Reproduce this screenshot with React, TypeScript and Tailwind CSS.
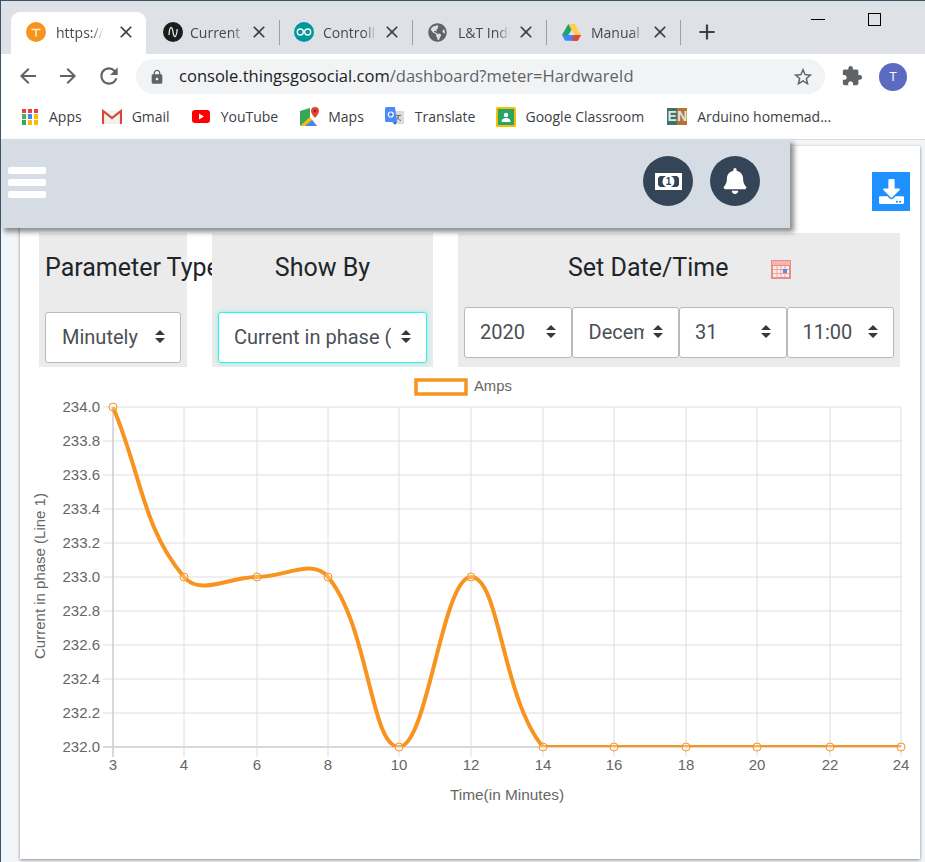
import type { ReactNode } from "react";
import { FaBell, FaDownload, FaGlobeAmericas } from "react-icons/fa";
import {
  MdAdd,
  MdArrowBack,
  MdArrowForward,
  MdClose,
  MdExtension,
  MdLock,
  MdRefresh,
  MdStarBorder,
} from "react-icons/md";

const ORANGE = "#f7931e";

function OrangeIcon() {
  return (
    <svg width="20" height="20" viewBox="0 0 20 20">
      <circle cx="10" cy="10" r="10" fill="#f7941d" />
      <path d="M5.5 7.5h9M10 7.5v7" stroke="#ffe9cf" strokeWidth="1.6" fill="none" />
    </svg>
  );
}

function SineIcon() {
  return (
    <svg width="20" height="20" viewBox="0 0 20 20">
      <circle cx="10" cy="10" r="10" fill="#1c1c1c" />
      <path d="M6 13C6.500 4 9 3 10 10s3.500 6 4.200-3" stroke="#e8e8e8" strokeWidth="1.300" fill="none" />
    </svg>
  );
}

function ArduinoIcon() {
  return (
    <svg width="20" height="20" viewBox="0 0 20 20">
      <circle cx="10" cy="10" r="10" fill="#00979c" />
      <circle cx="6.300" cy="10" r="3" stroke="#fff" strokeWidth="1.300" fill="none" />
      <circle cx="13.700" cy="10" r="3" stroke="#fff" strokeWidth="1.300" fill="none" />
    </svg>
  );
}

function DriveIcon() {
  return (
    <svg width="19" height="17" viewBox="0 0 19 17">
      <path d="M6.300 0h6.400l-6.300 11H0z" fill="#1fa463" />
      <path d="M6.300 0h6.400l6.300 11h-6.400z" fill="#ffd04b" />
      <path d="M0 11h19l-3.200 5.800H3.200z" fill="#4285f4" />
      <path d="M12.600 11H19l-3.200 5.800h-6.400z" fill="#ea4335" />
    </svg>
  );
}

function AppsIcon() {
  const colors = ["#ea4335", "#ea4335", "#ea4335", "#4caf50", "#4285f4", "#fbbc05", "#34a853", "#fbbc05", "#fbbc05"];
  return (
    <div className="grid h-[16px] w-[16px] grid-cols-3 gap-[1.500px]">
      {colors.map((c, i) => (
        <span key={i} style={{ background: c }} />
      ))}
    </div>
  );
}

function GmailIcon() {
  return (
    <svg width="20" height="16" viewBox="0 0 20 16">
      <path d="M1 2v13h18V2" fill="#f4f0ee" />
      <path d="M1 15V2l9 7 9-7v13" stroke="#d5473a" strokeWidth="2.200" fill="none" />
    </svg>
  );
}

function YoutubeIcon() {
  return (
    <svg width="18" height="13" viewBox="0 0 18 13">
      <rect width="18" height="13" rx="3" fill="#f00" />
      <path d="M7 3.500v6l5-3z" fill="#fff" />
    </svg>
  );
}

function MapsIcon() {
  return (
    <svg width="19" height="19" viewBox="0 0 19 19">
      <path d="M0 4l10-3v16L0 19z" fill="#34a853" />
      <path d="M0 19l10-9 7 9z" fill="#fbbc05" />
      <path d="M5 19l7-6 5 6z" fill="#4285f4" />
      <path d="M15 0a4 4 0 0 1 4 4c0 3-4 7-4 7s-4-4-4-7a4 4 0 0 1 4-4z" fill="#ea4335" />
      <circle cx="15" cy="4" r="1.500" fill="#8e2a22" />
    </svg>
  );
}

function TranslateIcon() {
  return (
    <svg width="19" height="19" viewBox="0 0 19 19">
      <rect x="7" y="4" width="12" height="13" rx="1" fill="#d8dade" />
      <path d="M11 8.500h5M13.500 8v1c0 2-1.500 4-3 4.500M12 10c.6 1.600 2 3 4 3.500" stroke="#6a6a6a" strokeWidth="1" fill="none" />
      <path d="M1.500 0H10l2 15H1.500A1.500 1.500 0 0 1 0 13.500v-12A1.500 1.500 0 0 1 1.500 0z" fill="#4c8bf5" />
      <circle cx="5.800" cy="7.500" r="2.500" stroke="#fff" strokeWidth="1.200" fill="none" />
      <path d="M8 15l2 3 2-3z" fill="#3367d6" />
    </svg>
  );
}

function ClassroomIcon() {
  return (
    <svg width="20" height="20" viewBox="0 0 20 20">
      <rect width="20" height="20" rx="1.500" fill="#fbbc04" />
      <rect x="2" y="2" width="16" height="16" fill="#25a667" />
      <circle cx="10" cy="8" r="2.200" fill="#fff" />
      <path d="M5.500 15c0-3 2-4 4.500-4s4.500 1 4.500 4z" fill="#fff" />
    </svg>
  );
}

function EnIcon() {
  return (
    <div className="flex h-[17px] w-[20px] text-center text-[14px] leading-[17px] font-bold text-[#dfe6e2] [font-family:'Liberation_Sans',sans-serif]">
      <span className="w-[10px] overflow-hidden bg-[#3f7268]">E</span>
      <span className="w-[10px] overflow-hidden bg-[#b87333]">N</span>
    </div>
  );
}

function Tab({ icon, label, cls, textW }: { icon: ReactNode; label: string; cls: string; textW: string }) {
  return (
    <div className={`relative flex h-[42px] items-center pb-[2px] ${cls}`}>
      <div className="flex w-[20px] shrink-0 justify-center">{icon}</div>
      <div
        className={`overflow-hidden whitespace-nowrap ${textW} text-[14px] text-[#45494f] [mask-image:linear-gradient(to_right,black_75%,transparent)]`}
      >
        {label}
      </div>
      <MdClose className="absolute top-[10px] right-[10px] text-[#3c4043]" size={20} />
    </div>
  );
}

function TabSep() {
  return <span className="mb-[9px] h-[25px] w-px shrink-0 bg-[#9aa0a6]" />;
}

function Bookmark({ icon, label, gap }: { icon: ReactNode; label: string; gap: string }) {
  return (
    <div className={`flex items-center ${gap}`}>
      <div className="flex w-[20px] justify-center">{icon}</div>
      <span className="text-[14px] whitespace-nowrap text-[#3c4043]">{label}</span>
    </div>
  );
}

function Chevrons() {
  return (
    <svg width="10" height="13" viewBox="0 0 10 13" className="shrink-0">
      <path d="M5 0l5 5H0zM5 13l5-5H0z" fill="#343a40" />
    </svg>
  );
}

function Select({ value, cls, textW }: { value: string; cls: string; textW: string }) {
  return (
    <div className={`flex items-center justify-between rounded-[3px] bg-white pb-[2px] text-[20px] text-[#495057] ${cls}`}>
      <span className={`overflow-hidden whitespace-nowrap ${textW}`}>{value}</span>
      <Chevrons />
    </div>
  );
}

function CalendarIcon() {
  return (
    <svg width="20" height="19" viewBox="0 0 20 19">
      <rect width="20" height="19" fill="#e58f88" />
      <rect x="1" y="1" width="18" height="4" fill="#f6b4ae" />
      <rect x="2" y="6" width="16" height="11" fill="#fdeceb" />
      <path d="M2 9.500h16M2 13.500h16M6 6v11M10 6v11M14 6v11" stroke="#eda29b" strokeWidth="1" />
      <rect x="12" y="9" width="4" height="4" fill="#5b8de8" />
    </svg>
  );
}

function MoneyIcon() {
  return (
    <svg width="27" height="17" viewBox="0 0 27 17">
      <rect width="27" height="17" fill="#fff" />
      <path d="M5 3h17l2 2v7l-2 2H5l-2-2V5z" fill="#344557" />
      <circle cx="13.500" cy="8.500" r="6" fill="#fff" />
      <text x="13.500" y="12" textAnchor="middle" fontSize="10" fontWeight="700" fill="#344557" fontFamily="Liberation Sans">
        1
      </text>
    </svg>
  );
}

const xs = [113, 184, 257, 328, 399, 471, 543, 614, 686, 757, 830, 901];
const xLabels = ["3", "4", "6", "8", "10", "12", "14", "16", "18", "20", "22", "24"];
const yTicks = ["234.0", "233.8", "233.6", "233.4", "233.2", "233.0", "232.8", "232.6", "232.4", "232.2", "232.0"];
const values = [234, 233, 233, 233, 232, 233, 232, 232, 232, 232, 232, 232];
const Y_TOP = 407;
const Y_BOTTOM = 747;

const pts = values.map((v, i) => ({ x: xs[i], y: Y_BOTTOM - (v - 232) * 170 }));

// same spline the chart library uses, tension 0.4
function linePath() {
  const clampY = (y: number) => Math.min(Y_BOTTOM, Math.max(Y_TOP, y));
  const ctrl = pts.map((cur, i) => {
    const prev = pts[Math.max(0, i - 1)];
    const next = pts[Math.min(pts.length - 1, i + 1)];
    const d01 = Math.hypot(cur.x - prev.x, cur.y - prev.y);
    const d12 = Math.hypot(next.x - cur.x, next.y - cur.y);
    const total = d01 + d12;
    const fa = (0.4 * d01) / total;
    const fb = (0.4 * d12) / total;
    return {
      px: cur.x - fa * (next.x - prev.x),
      py: clampY(cur.y - fa * (next.y - prev.y)),
      nx: cur.x + fb * (next.x - prev.x),
      ny: clampY(cur.y + fb * (next.y - prev.y)),
    };
  });
  let d = `M${pts[0].x} ${pts[0].y}`;
  for (let i = 1; i < pts.length; i++) {
    d += `C${ctrl[i - 1].nx} ${ctrl[i - 1].ny} ${ctrl[i].px} ${ctrl[i].py} ${pts[i].x} ${pts[i].y}`;
  }
  return d;
}

function Chart() {
  return (
    <svg width="905" height="490" viewBox="20 372 905 490" className="block [font-family:'Liberation_Sans',sans-serif]">
      <rect x="416" y="380" width="50" height="14" fill="#fff" stroke={ORANGE} strokeWidth="3.500" />
      <text x="474" y="391" fontSize="14.800" fill="#666">Amps</text>
      {yTicks.map((t, i) => {
        const y = Y_TOP + i * 34;
        return (
          <g key={t}>
            <line x1="103" x2="901" y1={y} y2={y} stroke={i === 10 ? "#cccccc" : "#dedede"} strokeWidth={i === 10 ? 1.500 : 1} />
            <text x="100" y={y + 5} textAnchor="end" fontSize="15" fill="#666">{t}</text>
          </g>
        );
      })}
      {xs.map((x, i) => (
        <g key={x}>
          <line x1={x} x2={x} y1={Y_TOP} y2="757" stroke={i === 0 ? "#cccccc" : "#dedede"} strokeWidth={i === 0 ? 1.500 : 1} />
          <text x={x} y="770" textAnchor="middle" fontSize="15" fill="#666">{xLabels[i]}</text>
        </g>
      ))}
      <clipPath id="area">
        <rect x="111" y={Y_TOP} width="792" height={Y_BOTTOM - Y_TOP} />
      </clipPath>
      <path d={linePath()} fill="none" stroke={ORANGE} strokeWidth="4" clipPath="url(#area)" />
      {pts.map((p) => (
        <circle key={p.x} cx={p.x} cy={p.y} r="4" fill="#fff" fillOpacity="0.25" stroke={ORANGE} strokeWidth="1" />
      ))}
      <text x="507" y="800" textAnchor="middle" fontSize="15.400" fill="#666">Time(in Minutes)</text>
      <text transform="translate(45 576) rotate(-90)" textAnchor="middle" fontSize="15" fill="#666">
        Current in phase (Line 1)
      </text>
    </svg>
  );
}

export default function App() {
  return (
    <div className="relative h-[862px] w-[925px] overflow-hidden border-t border-l border-[#3c5566] bg-[#f3f6f9] [font-family:Roboto,sans-serif]">
      {/* browser chrome */}
      <div className="[font-family:'Open_Sans',sans-serif]">
        <div className="relative flex h-[53px] items-end bg-[#dee1e6] pl-[10px]">
          <div className="rounded-t-[9px] bg-white">
            <Tab cls="w-[135px] pl-[15px]" icon={<OrangeIcon />} label="https://c" textW="ml-[10px] w-[48px]" />
          </div>
          <Tab cls="w-[133px] pl-[17px]" icon={<SineIcon />} label="Current" textW="ml-[7px] w-[56px]" />
          <TabSep />
          <Tab cls="w-[132px] pl-[14px]" icon={<ArduinoIcon />} label="Controll" textW="ml-[9px] w-[54px]" />
          <TabSep />
          <Tab cls="w-[133px] pl-[14px]" icon={<FaGlobeAmericas color="#5f6368" size={19} />} label="L&T Indi" textW="ml-[11px] w-[52px]" />
          <TabSep />
          <Tab cls="w-[133px] pl-[14px]" icon={<DriveIcon />} label="Manual" textW="ml-[10px] w-[54px]" />
          <TabSep />
          <MdAdd className="mb-[9px] ml-[13px] text-[#3c4043]" size={26} />
          <span className="absolute top-[18px] left-[810px] h-px w-[14px] bg-black" />
          <span className="absolute top-[12px] left-[867px] h-[13px] w-[13px] border border-black" />
        </div>
        <div className="flex h-[44px] items-center bg-white pl-[15px]">
          <MdArrowBack className="text-[#5f6368]" size={24} />
          <MdArrowForward className="ml-[16px] text-[#5f6368]" size={24} />
          <MdRefresh className="ml-[16px] text-[#5f6368]" size={26} />
          <div className="mt-px ml-[14px] flex h-[35px] w-[689px] items-center rounded-full bg-[#f1f3f4] pl-[13px]">
            <MdLock className="text-[#5f6368]" size={16} />
            <span className="ml-[14px] text-[16.560px] whitespace-nowrap text-[#202124]">
              console.thingsgosocial.com
              <span className="text-[#5f6368]">/dashboard?meter=HardwareId</span>
            </span>
            <MdStarBorder className="mr-[11px] ml-auto text-[#5f6368]" size={22} />
          </div>
          <MdExtension className="ml-[16px] text-[#5f6368]" size={22} />
          <div className="mt-[2px] ml-[16px] flex h-[28px] w-[28px] items-center justify-center rounded-full bg-[#5c6bc0] text-[13px] text-white">
            T
          </div>
        </div>
        <div className="flex h-[41px] items-center bg-white pb-[4px] pl-[19px]">
          <Bookmark icon={<AppsIcon />} label="Apps" gap="gap-[9px]" />
          <div className="ml-[20px]"><Bookmark icon={<GmailIcon />} label="Gmail" gap="gap-[10px]" /></div>
          <div className="ml-[21px]"><Bookmark icon={<YoutubeIcon />} label="YouTube" gap="gap-[10px]" /></div>
          <div className="ml-[21px]"><Bookmark icon={<MapsIcon />} label="Maps" gap="gap-[9px]" /></div>
          <div className="ml-[21px]"><Bookmark icon={<TranslateIcon />} label="Translate" gap="gap-[10px]" /></div>
          <div className="ml-[21px]"><Bookmark icon={<ClassroomIcon />} label="Google Classroom" gap="gap-[9px]" /></div>
          <div className="ml-[23px]"><Bookmark icon={<EnIcon />} label="Arduino homemad..." gap="gap-[10px]" /></div>
        </div>
      </div>

      {/* page */}
      <div className="h-[7px] border-t border-[#dadce0]" />
      <div className="ml-[19px] h-[713px] w-[900px] bg-white shadow-[0_1px_3px_rgba(0,0,0,0.45)]">
        <div className="flex h-[87px] justify-end pt-[26px] pr-[10px]">
          <div className="flex h-[39px] w-[38px] items-center justify-center bg-[#1e90ff] text-white">
            <FaDownload size={25} />
          </div>
        </div>
        <div className="flex items-start pl-[19px] text-[#212529]">
          <div className="h-[134px] w-[148px] bg-[#ebebeb] pt-[21px] pl-[6px]">
            <div className="text-[25px] leading-[28px] whitespace-nowrap">Parameter Type</div>
            <Select value="Minutely" cls="mt-[30px] h-[51px] w-[136px] border border-[#b9b9b9] pr-[15px] pl-[16px]" textW="w-[85px]" />
          </div>
          <div className="relative ml-[25px] h-[134px] w-[221px] bg-[#ebebeb] pt-[21px] pl-[6px]">
            <div className="pr-[6px] text-center text-[25px] leading-[28px]">Show By</div>
            <Select
              value="Current in phase (Line 1)"
              cls="mt-[30px] h-[51px] w-[209px] border border-[#28f5e8] pr-[15px] pl-[15px] shadow-[0_0_4px_rgba(40,245,232,0.5)]"
              textW="w-[157px]"
            />
          </div>
          <div className="ml-[25px] h-[134px] w-[442px] bg-[#ebebeb] pt-[21px] pl-[6px]">
            <div className="flex items-center">
              <div className="ml-[104px] text-[25px] leading-[28px]">Set Date/Time</div>
              <div className="mt-[2px] ml-[43px]"><CalendarIcon /></div>
            </div>
            <div className="mt-[25px] flex">
              <Select value="2020" cls="h-[51px] w-[107.500px] border border-[#b9b9b9] pr-[15px] pl-[15px]" textW="w-[60px]" />
              <Select value="December" cls="h-[51px] w-[107.500px] border border-[#b9b9b9] pr-[15px] pl-[16px]" textW="w-[55px]" />
              <Select value="31" cls="h-[51px] w-[107.500px] border border-[#b9b9b9] pr-[15px] pl-[15px]" textW="w-[60px]" />
              <Select value="11:00" cls="h-[51px] w-[107.500px] border border-[#b9b9b9] pr-[15px] pl-[15px]" textW="w-[60px]" />
            </div>
          </div>
        </div>
        <div className="pt-[5px]">
          <Chart />
        </div>
      </div>

      {/* top bar lies over the page */}
      <div className="absolute top-[138px] left-[-1px] flex h-[89px] w-[790px] items-center justify-between bg-[#d6dce4] pr-[29px] pl-[8px] shadow-[4px_4px_5px_rgba(0,0,0,0.45)]">
        <div className="mt-[-2px] flex w-[38px] flex-col gap-[5px]">
          <span className="h-[7px] rounded-[2px] bg-white" />
          <span className="h-[7px] rounded-[2px] bg-white" />
          <span className="h-[7px] rounded-[2px] bg-white" />
        </div>
        <div className="mt-[-5px] mr-px flex gap-[17px]">
          <div className="flex h-[50px] w-[50px] items-center justify-center rounded-full bg-[#344557]">
            <MoneyIcon />
          </div>
          <div className="flex h-[50px] w-[50px] items-center justify-center rounded-full bg-[#344557] text-white">
            <FaBell size={26} />
          </div>
        </div>
      </div>
    </div>
  );
}
